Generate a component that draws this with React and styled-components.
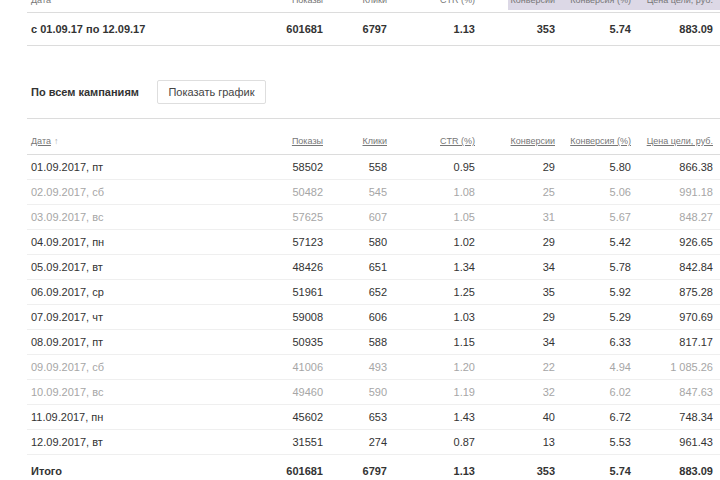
import styled, { createGlobalStyle } from "styled-components";

const GlobalStyle = createGlobalStyle`
    html, body {
        margin: 0;
        padding: 0;
        background: #fff;
        overflow: hidden;
    }
    body {
        font-family: "Liberation Sans", Arial, sans-serif;
        color: #333;
    }
`;

const COLS = "223px 77px 64px 88px 80px 76px 85px";

const Page = styled.div`
    margin-top: -10px;
    padding-left: 27px;
`;

const Row = styled.div`
    display: grid;
    grid-template-columns: ${COLS};
    box-sizing: border-box;
    height: ${(p) => p.$h}px;
    border-bottom: 1px solid ${(p) => (p.$strong ? "#dcdcdc" : "#efefef")};
    align-items: ${(p) => (p.$head ? "end" : "center")};
    padding-bottom: ${(p) => p.$pb || 0}px;
`;

const Cell = styled.div`
    padding: 0 ${(p) => (p.$last ? 7 : 4)}px 0 4px;
    text-align: ${(p) => (p.$left ? "left" : "right")};
    font-size: 11px;
    font-weight: ${(p) => (p.$bold ? 700 : 400)};
    color: ${(p) => (p.$muted ? "#a6a6a6" : "#333")};
    white-space: nowrap;
`;

const HeadCell = styled.div`
    align-self: stretch;
    display: flex;
    align-items: flex-end;
    justify-content: ${(p) => (p.$left ? "flex-start" : "flex-end")};
    margin-left: ${(p) => p.$inset || 0}px;
    padding: 0 ${(p) => (p.$last ? 7 : 4)}px ${(p) => p.$pb}px 4px;
    background: ${(p) => (p.$hl ? "#dcd8e6" : "transparent")};
    font-size: 9px;
    color: #777;
    white-space: nowrap;

    & > span {
        text-decoration: ${(p) => (p.$link ? "underline" : "none")};
    }
`;

const Arrow = styled.i`
    font-style: normal;
    color: #aaa;
    margin-left: 3px;
`;

const Toolbar = styled.div`
    display: flex;
    align-items: center;
    gap: 18px;
    padding: 34px 0 14px 4px;
    border-bottom: 1px solid #dcdcdc;
`;

const Title = styled.div`
    font-size: 11px;
    font-weight: 700;
    color: #333;
`;

const Button = styled.button`
    height: 24px;
    width: 109px;
    box-sizing: border-box;
    border: 1px solid #dedede;
    border-radius: 2px;
    background: #fff;
    font-family: inherit;
    font-size: 11px;
    color: #444;
    padding: 0;
`;

const labels = ["Дата", "Показы", "Клики", "CTR (%)", "Конверсии", "Конверсия (%)", "Цена цели, руб."];

const rows = [
    ["01.09.2017, пт", "58502", "558", "0.95", "29", "5.80", "866.38", false],
    ["02.09.2017, сб", "50482", "545", "1.08", "25", "5.06", "991.18", true],
    ["03.09.2017, вс", "57625", "607", "1.05", "31", "5.67", "848.27", true],
    ["04.09.2017, пн", "57123", "580", "1.02", "29", "5.42", "926.65", false],
    ["05.09.2017, вт", "48426", "651", "1.34", "34", "5.78", "842.84", false],
    ["06.09.2017, ср", "51961", "652", "1.25", "35", "5.92", "875.28", false],
    ["07.09.2017, чт", "59008", "606", "1.03", "29", "5.29", "970.69", false],
    ["08.09.2017, пт", "50935", "588", "1.15", "34", "6.33", "817.17", false],
    ["09.09.2017, сб", "41006", "493", "1.20", "22", "4.94", "1 085.26", true],
    ["10.09.2017, вс", "49460", "590", "1.19", "32", "6.02", "847.63", true],
    ["11.09.2017, пн", "45602", "653", "1.43", "40", "6.72", "748.34", false],
    ["12.09.2017, вт", "31551", "274", "0.87", "13", "5.53", "961.43", false],
];

const total = ["Итого", "601681", "6797", "1.13", "353", "5.74", "883.09"];
const period = ["с 01.09.17 по 12.09.17", "601681", "6797", "1.13", "353", "5.74", "883.09"];

function DataRow({ cells, h, muted, bold, strong }) {
    return (
        <Row $h={h} $strong={strong}>
            {cells.map((c, i) => (
                <Cell key={i} $left={i === 0} $last={i === 6} $muted={muted} $bold={bold}>
                    {c}
                </Cell>
            ))}
        </Row>
    );
}

export default function App() {
    return (
        <Page>
            <GlobalStyle />

            <Row $h={23} $strong $head $pb={2}>
                {labels.map((l, i) => (
                    <HeadCell
                        key={l}
                        $left={i === 0}
                        $last={i === 6}
                        $hl={i >= 4}
                        $inset={i === 4 ? 29 : 0}
                        $pb={5}
                    >
                        <span>{l}</span>
                    </HeadCell>
                ))}
            </Row>
            <DataRow cells={period} h={33} bold strong />

            <Toolbar>
                <Title>По всем кампаниям</Title>
                <Button>Показать график</Button>
            </Toolbar>

            <Row $h={36} $strong $head>
                {labels.map((l, i) => (
                    <HeadCell key={l} $left={i === 0} $last={i === 6} $link $pb={8}>
                        <span>{l}</span>
                        {i === 0 && <Arrow>↑</Arrow>}
                    </HeadCell>
                ))}
            </Row>
            {rows.map((r) => (
                <DataRow key={r[0]} cells={r.slice(0, 7)} h={25} muted={r[7]} />
            ))}
            <DataRow cells={total} h={32} bold />
        </Page>
    );
}
